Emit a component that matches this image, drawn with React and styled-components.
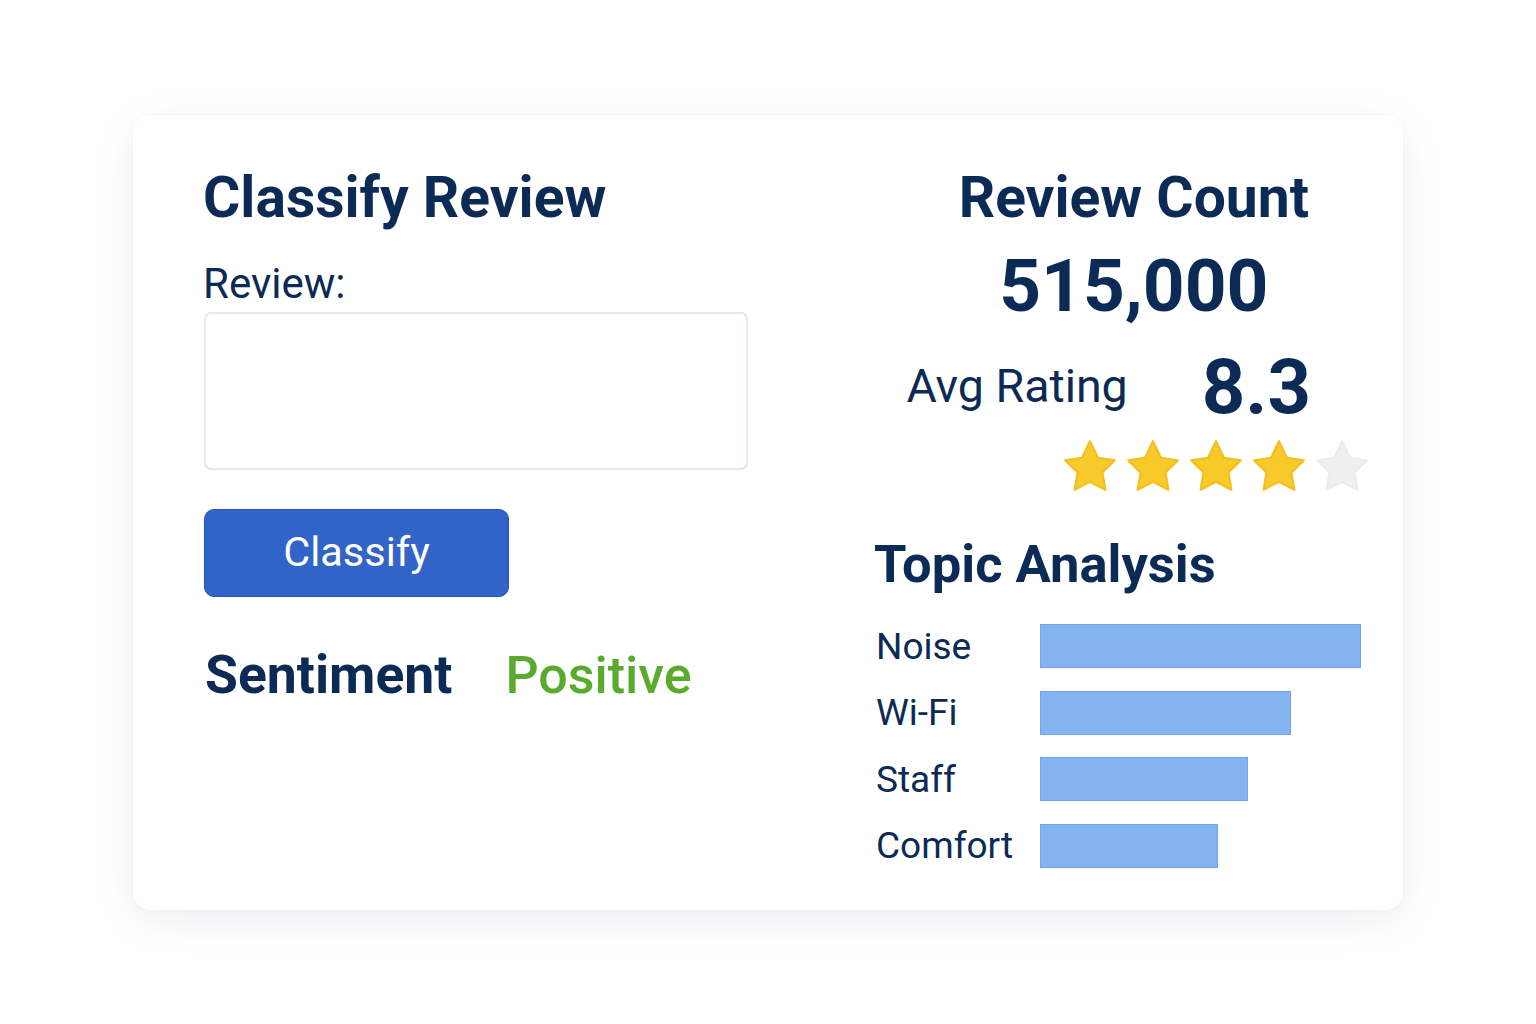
import React from "react";
import styled, { createGlobalStyle } from "styled-components";

const Global = createGlobalStyle`
  * { box-sizing: border-box; }
  html, body { margin: 0; padding: 0; background: #ffffff; }
  body { font-family: Roboto, "Liberation Sans", Arial, sans-serif; color: #0b2a55; }
`;

const Page = styled.div`
  width: 1536px;
  height: 1024px;
  display: flex;
  align-items: center;
  justify-content: center;
  background: #ffffff;
`;

const Card = styled.div`
  width: 1270px;
  background: #ffffff;
  border-radius: 18px;
  box-shadow: 0 10px 44px rgba(20, 35, 70, 0.07), 0 1px 4px rgba(20, 35, 70, 0.03);
  padding: 54px 34px 42px 70px;
  display: grid;
  grid-template-columns: 544px 494px;
  column-gap: 127px;
`;

const LeftCol = styled.div`
  display: flex;
  flex-direction: column;
  align-items: flex-start;
`;

const Heading = styled.h1`
  margin: 0;
  font-size: ${(p) => p.$size || 57}px;
  line-height: 1;
  font-weight: 700;
  color: #0b2a55;
  letter-spacing: 0;
`;

const Label = styled.label`
  margin-top: 37px;
  font-size: 42px;
  line-height: 1;
  font-weight: 400;
  color: #0b2a55;
`;

const ReviewBox = styled.textarea`
  margin-top: 7px;
  margin-left: 1px;
  width: 544px;
  height: 158px;
  border: 2px solid #e0e8f4;
  border-radius: 7px;
  resize: none;
  outline: none;
  background: #ffffff;
  font-family: inherit;
  font-size: 24px;
`;

const PrimaryButton = styled.button`
  margin-top: 39px;
  margin-left: 1px;
  width: 305px;
  height: 88px;
  background: #3163c9;
  border: 1.5px solid #2553c0;
  border-radius: 10px;
  color: #ffffff;
  font-family: inherit;
  font-size: 41.5px;
  font-weight: 400;
  display: flex;
  align-items: center;
  justify-content: center;
  padding: 0 0 2px 0;
  cursor: pointer;
`;

const SentimentRow = styled.div`
  margin-top: 51px;
  margin-left: 2px;
  display: flex;
  align-items: baseline;
  gap: 53px;
`;

const SentimentLabel = styled.span`
  font-size: 53.5px;
  line-height: 1;
  font-weight: 700;
  color: #0b2a55;
`;

const SentimentValue = styled.span`
  font-size: 52px;
  line-height: 1;
  font-weight: 500;
  color: #5aaa2e;
`;

const RightCol = styled.div`
  display: flex;
  flex-direction: column;
`;

const Stats = styled.div`
  display: flex;
  flex-direction: column;
  align-items: flex-end;
`;

const CountGroup = styled.div`
  display: flex;
  flex-direction: column;
  align-items: center;
  margin-right: 59px;
`;

const BigNumber = styled.div`
  margin-top: ${(p) => p.$top || 0}px;
  font-size: ${(p) => p.$size}px;
  line-height: 1;
  font-weight: 700;
  color: #0b2a55;
`;

const AvgRow = styled.div`
  margin-top: 26px;
  margin-right: 57px;
  display: flex;
  align-items: center;
  gap: 74px;
`;

const AvgLabel = styled.span`
  font-size: 46.5px;
  line-height: 1;
  font-weight: 400;
  color: #0b2a55;
`;

const Stars = styled.div`
  margin-top: 14px;
  margin-right: -4px;
  display: flex;
  gap: 3px;
`;

const StarSvg = styled.svg`
  width: 60px;
  height: 60px;
  display: block;
`;

const TopicHeading = styled(Heading)`
  margin-top: 39px;
`;

const Bars = styled.div`
  margin-top: 34px;
  display: flex;
  flex-direction: column;
  gap: 22.5px;
`;

const BarRow = styled.div`
  display: grid;
  grid-template-columns: 166px 1fr;
  align-items: center;
  height: 44px;
`;

const BarLabel = styled.span`
  padding-left: 2px;
  font-size: 37px;
  line-height: 1;
  font-weight: 400;
  color: #0b2a55;
  white-space: nowrap;
`;

const Bar = styled.div`
  height: 44px;
  background: #84b4f0;
  border: 1.5px solid #70a6ee;
`;

const Star = ({ filled }) => (
  <StarSvg viewBox="0 0 24 24">
    <path
      d="M12 0.9l3.15 6.6 6.75 1.05-4.95 4.85 1.2 6.85L12 17.1l-6.15 3.15 1.2-6.85-4.95-4.85 6.75-1.05z"
      fill={filled ? "#f9ca2c" : "#efefef"}
      stroke={filled ? "#f3c11f" : "#ececec"}
      strokeWidth="0.9"
      strokeLinejoin="round"
    />
  </StarSvg>
);

const topics = [
  { name: "Noise", width: 321 },
  { name: "Wi-Fi", width: 251 },
  { name: "Staff", width: 208 },
  { name: "Comfort", width: 178 },
];

export default function App() {
  return (
    <>
      <Global />
      <Page>
        <Card>
          <LeftCol>
            <Heading>Classify Review</Heading>
            <Label htmlFor="review">Review:</Label>
            <ReviewBox id="review" />
            <PrimaryButton>Classify</PrimaryButton>
            <SentimentRow>
              <SentimentLabel>Sentiment</SentimentLabel>
              <SentimentValue>Positive</SentimentValue>
            </SentimentRow>
          </LeftCol>
          <RightCol>
            <Stats>
              <CountGroup>
                <Heading>Review Count</Heading>
                <BigNumber $size={73} $top={24}>515,000</BigNumber>
              </CountGroup>
              <AvgRow>
                <AvgLabel>Avg Rating</AvgLabel>
                <BigNumber $size={76}>8.3</BigNumber>
              </AvgRow>
              <Stars>
                {[1, 2, 3, 4, 5].map((i) => (
                  <Star key={i} filled={i <= 4} />
                ))}
              </Stars>
            </Stats>
            <TopicHeading $size={52.5}>Topic Analysis</TopicHeading>
            <Bars>
              {topics.map((t) => (
                <BarRow key={t.name}>
                  <BarLabel>{t.name}</BarLabel>
                  <Bar style={{ width: t.width }} />
                </BarRow>
              ))}
            </Bars>
          </RightCol>
        </Card>
      </Page>
    </>
  );
}
